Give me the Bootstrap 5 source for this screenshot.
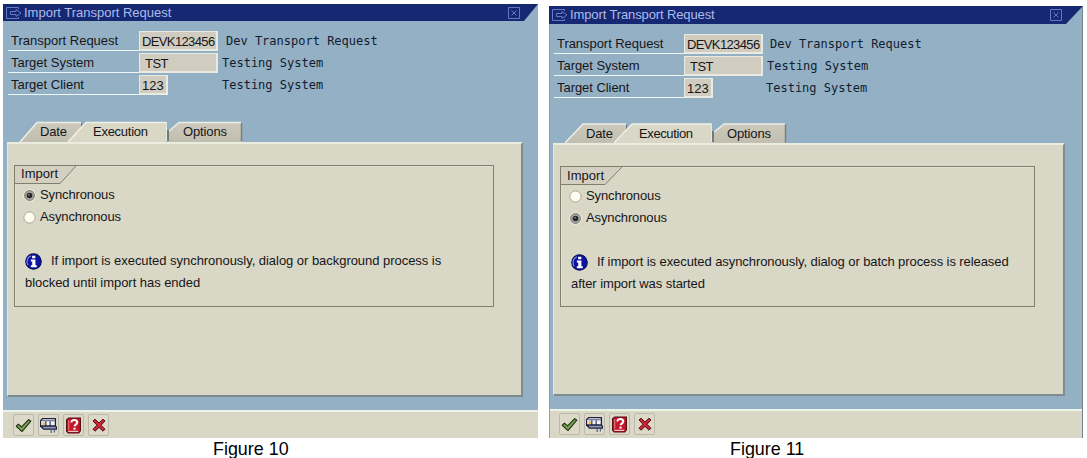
<!DOCTYPE html>
<html lang="en">
<head>
<meta charset="utf-8">
<meta name="viewport" content="width=device-width, initial-scale=1">
<title>Import Transport Request</title>
<link href="https://cdn.jsdelivr.net/npm/bootstrap@5.3.0/dist/css/bootstrap.min.css" rel="stylesheet">
<style>
  body { font: 13px/16px "Liberation Sans", Arial, sans-serif; color: #16161a; background: #fff; overflow: hidden; height: 458px; }
  .fig { width: 535px; margin: 4px 0 0 3px; height: 454px; }
  .fig-b { width: 534px; margin: 6px 0 0 11px; height: 452px; }
  .win { background: #94b0c4; height: 434px; }
  .fig-b .win { height: 432px; border-left: 1px solid #8fa0aa; border-right: 1px solid #72848e; }
  .titlebar { height: 17px; background: #162872; color: #adbbed; clip-path: polygon(0 0, 100% 0, calc(100% - 14px) 100%, 0 100%); padding: 0 18px 0 3px; gap: 2px; }
  .fig-b .titlebar { height: 18px; letter-spacing: -.12px; margin: 0 -1px; padding-right: 21px; clip-path: polygon(0 0, 100% 0, calc(100% - 17px) 100%, 0 100%); }
  .params { padding: 10px 0 0 5px; height: 100px; }
  .prow { height: 20px; margin-bottom: 2px; }
  .plabel { width: 131px; padding: 1px 0 0 3px; border-bottom: 1px solid #eef5f6; line-height: 18px; }
  .pfield { width: 79px; border: 2px solid #e9ebe3; border-left-width: 1px; border-top-width: 1px; background: #d0cdc0; line-height: 19px; white-space: nowrap; letter-spacing: -.63px; padding-left: 2px; }
  .pfield.pad { padding-left: 5px; letter-spacing: -.5px; }
  .pfield.short { width: 29px; padding-left: 2px; letter-spacing: 0; }
  .pdesc { font: 12px/21px "DejaVu Sans Mono", monospace; color: #101c30; margin-left: 4px; white-space: pre; }
  .prow:first-child .pdesc { margin-left: 8px; }
  .lastdesc { width: 316px; }
  .tabstrip { height: 21px; margin-left: 4px; }
  .tabstrip svg { display: block; overflow: visible; }
  .tabstrip text { font-size: 13px; fill: #16161a; }
  .pane { margin-left: 4px; width: 516px; height: 255px; background: #d9d7c5; border: solid; border-width: 2px 2px 2px 1px; border-color: #e9ecdf #7e8c8d #7e8c8d #e5e7db; padding: 21px 0 0 6px; }
  .groupbox { width: 480px; height: 142px; border: 1px solid #817f6c; box-shadow: inset 1px 1px 0 #e2e0d2; }
  .gtitle { height: 18px; display: block; overflow: visible; }
  .gtitle text { font-size: 13px; fill: #16161a; }
  .opt { height: 22px; padding-left: 8px; gap: 4px; letter-spacing: -.12px; }
  .hint { padding: 22px 10px 0 10px; line-height: 22px; white-space: nowrap; letter-spacing: -.04px; }
  .hint svg { margin-right: 9px; flex: none; }
  .actions { background: #d9d7c5; height: 28px; border-top: 2px solid #edf2eb; padding: 2px 0 0 10px; gap: 4px; margin-top: 13px; }
  .act { width: 21px; height: 22px; padding: 0; border: 1px solid #bdb9aa; border-radius: 2px; background: #dcd9c9; }
  .figcap { font-size: 17.9px; line-height: 20px; color: #000; padding-left: 210px; padding-top: 1px; }

  .fig-b .params { height: 99px; padding: 10px 0 0 4px; }
  .fig-b .plabel { width: 130px; letter-spacing: -.05px; }
  .fig-b .prow:first-child .pdesc { margin-left: 7px; }
  .fig-b .pane { width: 512px; height: 253px; margin-left: 3px; }
  .fig-b .tabstrip { margin-left: 3px; height: 20px; }
  .fig-b .groupbox { width: 475px; height: 141px; }
  .fig-b .hint { letter-spacing: -.08px; }
  .fig-b .actions { padding-left: 9px; height: 29px; }
  .fig-b .figcap { padding-left: 181px; }
</style>
</head>
<body class="d-flex">

<svg width="0" height="0" class="position-absolute" aria-hidden="true">
  <defs>
    <symbol id="i-exit" viewBox="0 0 16 12"><path d="M12.500 2V.5H.5v11h12V10M4.500 4.500h5.500v-2l5 3.500-5 3.500v-2H4.500z" fill="none" stroke="#6679c4"/></symbol>
    <symbol id="i-close" viewBox="0 0 12 12"><path d="M.5.5h11v11H.5zM3.500 3.500l5 5m0-5l-5 5" fill="none" stroke="#6477c4"/></symbol>
    <symbol id="i-on" viewBox="0 0 13 13"><circle cx="6.500" cy="6.500" r="5.800" fill="#e9e7da" stroke="#f2f0e4"/><circle cx="6.500" cy="6.500" r="4.900" fill="#a9a89d" stroke="#77766f"/><circle cx="6.500" cy="6.500" r="2.800" fill="#25252a"/><circle cx="6" cy="5.800" r="1" fill="#777"/></symbol>
    <symbol id="i-off" viewBox="0 0 13 13"><circle cx="6.500" cy="6.500" r="5.600" fill="#fffdef" stroke="#a9a698"/></symbol>
    <symbol id="i-info" viewBox="0 0 16 16"><circle cx="8" cy="8" r="7.300" fill="#0d14a4" stroke="#070a55"/><path d="M3 11.500A6 6 0 0 1 5.500 2.500" fill="none" stroke="#8f9be8"/><path d="M6.700 2.500h3v2.500h-3zM5.500 6.200h4.300v5.300h1.300v1.800H5.500v-1.800h1.300V8H5.500z" fill="#fff"/></symbol>
    <symbol id="i-ok" viewBox="0 0 16 16"><path d="M1.200 8.700l2-2 3 2.700 6.700-7 2 1.500L6.600 13.700z" fill="#79a44d" stroke="#20301a" stroke-linejoin="round"/></symbol>
    <symbol id="i-var" viewBox="0 0 16 16"><path d="M2.500 1.500h12v7h-14v-5z" fill="#eef0f6" stroke="#20203c" stroke-width="1.200"/><path d="M2 3.500h12" stroke="#5a648c"/><path d="M5.500 4v4.500M9.500 4v4.500" stroke="#20203c"/><path d="M2.500 5h2v3h-2z" fill="#e9b83e"/><path d="M.5 8.500h14l1 1v2H3.500z" fill="#8f9bbb" stroke="#20203c" stroke-width="1.200"/><path d="M10.500 12v3M13.500 12v2.500" stroke="#3a5580"/></symbol>
    <symbol id="i-help" viewBox="0 0 16 16"><path d="M1.500 2.500l2-1.500h11v12l-1.500 2H3l-1.500-1.500z" fill="#c5162a" stroke="#4f0b14"/><path d="M3 13.500h9.500" stroke="#f3dcd8"/><path d="M3.500 3v9" stroke="#ee7a7e"/><path d="M6 5.200c0-3.300 5.500-3.200 5.500 0 0 2-2.500 1.800-2.500 3.500" fill="none" stroke="#fff" stroke-width="1.900"/><path d="M8 10h2v1.900H8z" fill="#fff"/></symbol>
    <symbol id="i-no" viewBox="0 0 16 16"><path d="M2 4L4 2.200 8 6l4-3.800L14 4l-4 4.200 4 4-2 2-4-3.800-4 3.800-2-2 4-4z" fill="#cf2637" stroke="#4a1118" stroke-linejoin="round"/></symbol>
    <linearGradient id="tabfill" x1="0" x2="0" y1="0" y2="1"><stop offset="0" stop-color="#cdcabd"/><stop offset="1" stop-color="#c1beaf"/></linearGradient>
  </defs>
</svg>

<figure class="fig mb-0 flex-shrink-0">
  <section class="win d-flex flex-column">
    <header class="titlebar d-flex align-items-center flex-shrink-0">
      <svg width="16" height="12"><use href="#i-exit"/></svg><span>Import Transport Request</span>
      <svg width="12" height="12" class="ms-auto"><use href="#i-close"/></svg>
    </header>
    <div class="params flex-shrink-0">
      <div class="prow d-flex"><div class="plabel">Transport Request</div><div class="pfield">DEVK123456</div><div class="pdesc">Dev Transport Request</div></div>
      <div class="prow d-flex"><div class="plabel">Target System</div><div class="pfield pad">TST</div><div class="pdesc">Testing System</div></div>
      <div class="prow d-flex"><div class="plabel">Target Client</div><div class="pfield short me-auto">123</div><div class="pdesc lastdesc">Testing System</div></div>
    </div>
    <div class="tabstrip flex-shrink-0">
      <svg width="516" height="21">
        <path d="M13 21L30 1.500H74V21z" fill="url(#tabfill)"/><path d="M13 21L30 1.500H74" fill="none" stroke="#ecefe8" stroke-width="1.500"/><path d="M74.500 2v5" stroke="#6f7a7c"/>
        <path d="M160 21v-9L172 1.500h62V21z" fill="url(#tabfill)"/><path d="M161 11L172 1.500h62" fill="none" stroke="#ecefe8" stroke-width="1.500"/><path d="M234.500 2v18" stroke="#77817f" stroke-width="1.500"/>
        <path d="M61 22L79 1.500h80V22z" fill="#d9d7c5"/><path d="M61 21L79 1.500h80" fill="none" stroke="#f0f1e8" stroke-width="1.500"/><path d="M159.500 1v19" stroke="#e8eae0"/><path d="M161 9v11" stroke="#6f7a7c" stroke-width="2"/>
        <text x="33" y="15" textLength="27">Date</text><text x="86" y="15" textLength="55">Execution</text><text x="176" y="15" textLength="44">Options</text>
      </svg>
    </div>
    <div class="pane flex-shrink-0">
      <div class="groupbox">
        <svg class="gtitle" width="70" height="18"><path d="M0 0H61L45 17.500H0z" fill="#d3d0c1"/><path d="M61 0L45 17.500H0" fill="none" stroke="#817f6c"/><text x="6" y="12" textLength="37">Import</text></svg>
        <div class="opt d-flex align-items-center"><svg width="13" height="13"><use href="#i-on"/></svg>Synchronous</div>
        <div class="opt d-flex align-items-center"><svg width="13" height="13"><use href="#i-off"/></svg>Asynchronous</div>
        <div class="hint"><div class="d-flex align-items-center"><svg width="17" height="17"><use href="#i-info"/></svg>If import is executed synchronously, dialog or background process is</div><div>blocked until import has ended</div></div>
      </div>
    </div>
    <footer class="actions d-flex flex-shrink-0">
      <button class="act d-flex align-items-center justify-content-center" aria-label="Continue"><svg width="17" height="17"><use href="#i-ok"/></svg></button>
      <button class="act d-flex align-items-center justify-content-center" aria-label="Variant"><svg width="17" height="17"><use href="#i-var"/></svg></button>
      <button class="act d-flex align-items-center justify-content-center" aria-label="Help"><svg width="17" height="17"><use href="#i-help"/></svg></button>
      <button class="act d-flex align-items-center justify-content-center" aria-label="Cancel"><svg width="16" height="16"><use href="#i-no"/></svg></button>
    </footer>
  </section>
  <figcaption class="figcap">Figure 10</figcaption>
</figure>

<figure class="fig-b mb-0 flex-shrink-0">
  <section class="win d-flex flex-column">
    <header class="titlebar d-flex align-items-center flex-shrink-0">
      <svg width="16" height="12"><use href="#i-exit"/></svg><span>Import Transport Request</span>
      <svg width="12" height="12" class="ms-auto"><use href="#i-close"/></svg>
    </header>
    <div class="params flex-shrink-0">
      <div class="prow d-flex"><div class="plabel">Transport Request</div><div class="pfield">DEVK123456</div><div class="pdesc">Dev Transport Request</div></div>
      <div class="prow d-flex"><div class="plabel">Target System</div><div class="pfield pad">TST</div><div class="pdesc">Testing System</div></div>
      <div class="prow d-flex"><div class="plabel">Target Client</div><div class="pfield short me-auto">123</div><div class="pdesc lastdesc">Testing System</div></div>
    </div>
    <div class="tabstrip flex-shrink-0">
      <svg width="512" height="20">
        <path d="M12 20L30 1H73V20z" fill="url(#tabfill)"/><path d="M12 20L30 1H73" fill="none" stroke="#ecefe8" stroke-width="1.500"/><path d="M73.500 1.500v5" stroke="#6f7a7c"/>
        <path d="M159 20v-8L171 1h61V20z" fill="url(#tabfill)"/><path d="M160 10L171 1h61" fill="none" stroke="#ecefe8" stroke-width="1.500"/><path d="M232.500 1.500v18" stroke="#77817f" stroke-width="1.500"/>
        <path d="M61 21L79 1h79V21z" fill="#d9d7c5"/><path d="M61 20L79 1h79" fill="none" stroke="#f0f1e8" stroke-width="1.500"/><path d="M158.500.5v19" stroke="#e8eae0"/><path d="M160 8v11" stroke="#6f7a7c" stroke-width="2"/>
        <text x="33" y="15" textLength="27">Date</text><text x="86" y="15" textLength="54">Execution</text><text x="174" y="15" textLength="44">Options</text>
      </svg>
    </div>
    <div class="pane flex-shrink-0">
      <div class="groupbox">
        <svg class="gtitle" width="70" height="18"><path d="M0 0H61L44 17.500H0z" fill="#d3d0c1"/><path d="M61 0L44 17.500H0" fill="none" stroke="#817f6c"/><text x="6" y="12.500" textLength="37">Import</text></svg>
        <div class="opt d-flex align-items-center"><svg width="13" height="13"><use href="#i-off"/></svg>Synchronous</div>
        <div class="opt d-flex align-items-center"><svg width="13" height="13"><use href="#i-on"/></svg>Asynchronous</div>
        <div class="hint"><div class="d-flex align-items-center"><svg width="17" height="17"><use href="#i-info"/></svg>If import is executed asynchronously, dialog or batch process is released</div><div>after import was started</div></div>
      </div>
    </div>
    <footer class="actions d-flex flex-shrink-0">
      <button class="act d-flex align-items-center justify-content-center" aria-label="Continue"><svg width="17" height="17"><use href="#i-ok"/></svg></button>
      <button class="act d-flex align-items-center justify-content-center" aria-label="Variant"><svg width="17" height="17"><use href="#i-var"/></svg></button>
      <button class="act d-flex align-items-center justify-content-center" aria-label="Help"><svg width="17" height="17"><use href="#i-help"/></svg></button>
      <button class="act d-flex align-items-center justify-content-center" aria-label="Cancel"><svg width="16" height="16"><use href="#i-no"/></svg></button>
    </footer>
  </section>
  <figcaption class="figcap">Figure 11</figcaption>
</figure>

<script src="https://cdn.jsdelivr.net/npm/bootstrap@5.3.0/dist/js/bootstrap.bundle.min.js"></script>
</body>
</html>
